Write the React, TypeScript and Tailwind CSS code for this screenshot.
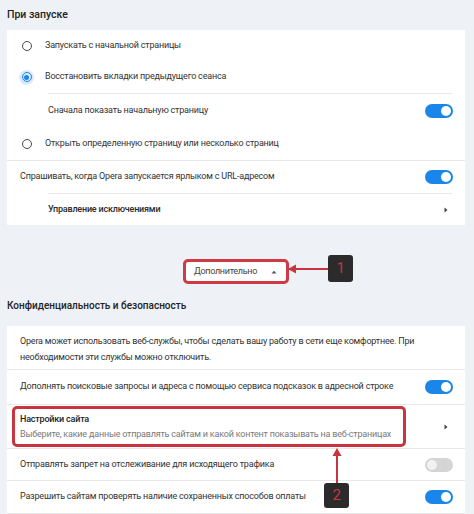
import React from "react";

const FONT = { fontFamily: 'Roboto, "Liberation Sans", sans-serif' };

function Radio({ checked }: { checked?: boolean }) {
  if (checked) {
    return (
      <span className="flex h-[15px] w-[15px] items-center justify-center rounded-full bg-[#dbeafb]">
        <span className="flex h-[10px] w-[10px] items-center justify-center rounded-full border-[1.5px] border-[#1a86ea]">
          <span className="h-[5px] w-[5px] rounded-full bg-[#1a86ea]" />
        </span>
      </span>
    );
  }
  return (
    <span className="flex h-[15px] w-[15px] items-center justify-center">
      <span className="h-[10px] w-[10px] rounded-full border-[1.5px] border-[#4a4a4a]" />
    </span>
  );
}

function Toggle({ on = true }: { on?: boolean }) {
  return (
    <span
      className={
        on
          ? "flex h-[14px] w-[28px] shrink-0 items-center justify-end rounded-full bg-[#1a86ea] px-[2px]"
          : "flex h-[14px] w-[28px] shrink-0 items-center justify-start rounded-full bg-[#d5d5d5] px-[2px]"
      }
    >
      <span className={on ? "h-[10px] w-[10px] rounded-full bg-white" : "h-[10px] w-[10px] rounded-full bg-[#f2f2f2]"} />
    </span>
  );
}

function Chevron() {
  return (
    <svg width="6" height="8" viewBox="0 0 6 8" className="mr-[16px] shrink-0">
      <path d="M1.5 1.5 L4.5 4 L1.5 6.5 Z" fill="#444" />
    </svg>
  );
}

export default function App() {
  return (
    <div
      className="relative h-[514px] w-[474px] overflow-hidden bg-[#eef1f5] pl-[7px] pr-[9px] text-[9px] tracking-[-0.2px] text-[#333]"
      style={FONT}
    >
      {/* При запуске */}
      <div className="flex h-[29px] items-center text-[10.5px] font-medium tracking-normal text-[#222]">При запуске</div>
      <div className="mt-px bg-white">
        <div className="flex h-[31px] items-center pl-[12px]">
          <Radio />
          <span className="ml-[11px]">Запускать с начальной страницы</span>
        </div>
        <div className="flex h-[32px] items-center pl-[12px]">
          <Radio checked />
          <span className="ml-[11px]">Восстановить вкладки предыдущего сеанса</span>
        </div>
        <div className="ml-[41px] mr-[13px] h-px bg-[#e8e8e8]" />
        <div className="flex h-[33px] items-center justify-between pl-[41px] pr-[12px]">
          <span>Сначала показать начальную страницу</span>
          <Toggle />
        </div>
        <div className="flex h-[33px] items-center pl-[12px]">
          <Radio />
          <span className="ml-[11px]">Открыть определенную страницу или несколько страниц</span>
        </div>
        <div className="h-px bg-[#e8e8e8]" />
        <div className="flex h-[32px] items-center justify-between pl-[13px] pr-[12px]">
          <span>Спрашивать, когда Opera запускается ярлыком с URL-адресом</span>
          <Toggle />
        </div>
        <div className="ml-[41px] mr-[13px] h-px bg-[#e8e8e8]" />
        <div className="flex h-[31px] items-center justify-between pl-[41px]">
          <span className="font-medium text-[#2a2a2a]">Управление исключениями</span>
          <Chevron />
        </div>
      </div>

      {/* Дополнительно */}
      <div className="flex h-[59px] items-end justify-center">
        <div className="flex h-[25px] w-[106px] items-center justify-between rounded-[5px] border-[3px] border-[#cf3a44] bg-white pl-[8px] pr-[9px] tracking-[-0.3px] text-[#444]">
          <span>Дополнительно</span>
          <svg width="6" height="4" viewBox="0 0 6 4" className="shrink-0">
            <path d="M0.5 3.5 L3 0.8 L5.5 3.5 Z" fill="#555" />
          </svg>
        </div>
      </div>

      <div className="flex h-[42px] items-center text-[10px] font-medium tracking-normal text-[#222]">
        Конфиденциальность и безопасность
      </div>
      <div className="bg-white">
        <div className="h-[43px] px-[13px] pt-[7px] leading-[16px]">
          Opera может использовать веб-службы, чтобы сделать вашу работу в сети еще комфортнее. При
          необходимости эти службы можно отключить.
        </div>
        <div className="h-px bg-[#e8e8e8]" />
        <div className="flex h-[34px] items-center justify-between pl-[13px] pr-[12px]">
          <span>Дополнять поисковые запросы и адреса с помощью сервиса подсказок в адресной строке</span>
          <Toggle />
        </div>
        <div className="h-px bg-[#e8e8e8]" />
        <div className="flex h-[43px] items-center justify-between pl-[13px]">
          <div className="flex flex-col leading-[15px]">
            <span className="font-medium text-[#222]">Настройки сайта</span>
            <span className="text-[#7a7a7a]">Выберите, какие данные отправлять сайтам и какой контент показывать на веб-страницах</span>
          </div>
          <Chevron />
        </div>
        <div className="h-px bg-[#e8e8e8]" />
        <div className="flex h-[31px] items-center justify-between pl-[13px] pr-[12px]">
          <span>Отправлять запрет на отслеживание для исходящего трафика</span>
          <Toggle on={false} />
        </div>
        <div className="h-px bg-[#e8e8e8]" />
        <div className="flex h-[32px] items-center justify-between pl-[13px] pr-[12px]">
          <span>Разрешить сайтам проверять наличие сохраненных способов оплаты</span>
          <Toggle />
        </div>
        <div className="h-px bg-[#e8e8e8]" />
      </div>

      {/* annotation 1 */}
      <div className="absolute left-[289px] top-[268px] h-[2px] w-[40px] bg-[#c8353f]" />
      <svg className="absolute left-[287px] top-[263px]" width="10" height="12" viewBox="0 0 10 12">
        <path d="M1 6 L9 1.5 L9 10.5 Z" fill="#c8353f" />
      </svg>
      <div className="absolute left-[328px] top-[255px] flex h-[27px] w-[25px] items-center justify-center rounded-[3px] bg-[#2b2b2b] text-[15px] text-[#c8353f]">
        1
      </div>

      {/* annotation 2 */}
      <div className="absolute left-[12px] top-[406px] h-[41px] w-[394px] rounded-[5px] border-[3px] border-[#c8353f]" />
      <div className="absolute left-[336px] top-[452px] h-[32px] w-[2px] bg-[#c8353f]" />
      <svg className="absolute left-[331px] top-[447px]" width="12" height="10" viewBox="0 0 12 10">
        <path d="M6 1 L10.5 9 L1.5 9 Z" fill="#c8353f" />
      </svg>
      <div className="absolute left-[324px] top-[483px] flex h-[25px] w-[25px] items-center justify-center rounded-[3px] bg-[#2b2b2b] text-[15px] text-[#c8353f]">
        2
      </div>
    </div>
  );
}
